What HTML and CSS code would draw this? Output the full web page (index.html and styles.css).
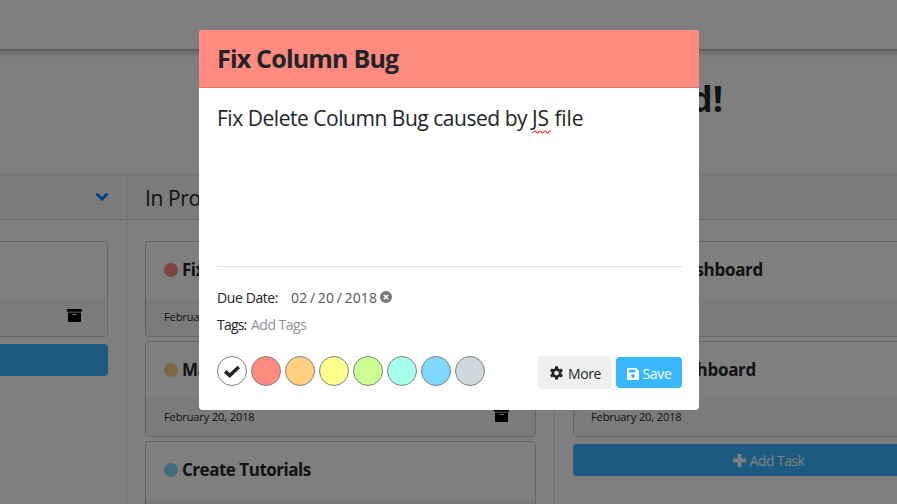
FILE: index.html
```html
<!DOCTYPE html>
<html lang="en">
<head>
<meta charset="utf-8">
<title>Dashboard</title>
<link rel="stylesheet" href="styles.css">
</head>
<body>
<svg class="sprite" aria-hidden="true">
  <symbol id="archive" viewBox="0 0 15 14"><path d="M.6 0h13.8q.6 0 .6.6v2.1H0V.6Q0 0 .6 0zM1 3.6h13v8.6q0 .8-.8.8H1.800q-.8 0-.8-.8zM5.500 5v1h4V5z" fill-rule="evenodd"/></symbol>
</svg>
<header class="navbar"></header>
<h1 class="welcome">Welcome to your Dashboard!</h1>
<main class="board">
  <section class="column first">
    <div class="column-head"><span></span>
      <svg class="chevron" viewBox="0 0 12 8"><path d="M1.500 1.500 6 6l4.500-4.500"/></svg>
    </div>
    <div class="cards">
      <article class="card"><div class="card-body"></div><div class="card-foot"><span></span><svg class="archive"><use href="#archive"/></svg></div></article>
      <div class="add"></div>
    </div>
  </section>
  <section class="column">
    <div class="column-head"><span>In Progress</span></div>
    <div class="cards">
      <article class="card"><div class="card-body"><i class="dot red"></i>Fix Column Bug</div><div class="card-foot"><span>February 20, 2018</span><svg class="archive"><use href="#archive"/></svg></div></article>
      <article class="card"><div class="card-body"><i class="dot orange"></i>Make Video</div><div class="card-foot"><span>February 20, 2018</span><svg class="archive"><use href="#archive"/></svg></div></article>
      <article class="card"><div class="card-body"><i class="dot blue"></i>Create Tutorials</div><div class="card-foot"></div></article>
    </div>
  </section>
  <section class="column last">
    <div class="column-head"><span>Done</span></div>
    <div class="cards">
      <article class="card"><div class="card-body"><span class="end">Create Dashboard</span></div><div class="card-foot"></div></article>
      <article class="card"><div class="card-body"><span class="end second">Style Dashboard</span></div><div class="card-foot"><span>February 20, 2018</span></div></article>
      <div class="add"><svg class="plus" viewBox="0 0 12 12"><path d="M6 0v12M0 6h12"/></svg><span>Add Task</span></div>
    </div>
  </section>
</main>
<div class="backdrop">
  <div class="modal">
    <div class="modal-head">Fix Column Bug</div>
    <div class="modal-body">
      <div class="description"><span class="lead">Fix Delete Column Bug caused by </span><span class="misspelt">JS<svg viewBox="0 0 19 4"><path d="M0 3l1-.5 1.500-1.500h1L5 3h1l1.500-2h1L10 3h1l1.500-2h1L15 3h1l1.500-2H19"/></svg></span> file</div>
      <div class="row due"><span class="label">Due Date:</span><span class="date">02 / 20 / 2018</span><svg class="clear" viewBox="0 0 12 12"><circle cx="6" cy="6" r="6"/><path d="M3.800 3.800l4.400 4.400M8.200 3.800 3.800 8.200"/></svg></div>
      <div class="row tags"><span class="label">Tags:</span><span class="placeholder">Add Tags</span></div>
      <div class="actions">
        <span class="swatch white"><svg viewBox="0 0 16 13"><path d="M1.200 6.400 5.700 10.500 14.800 2"/></svg></span>
        <span class="swatch red"></span><span class="swatch orange"></span><span class="swatch yellow"></span><span class="swatch green"></span><span class="swatch teal"></span><span class="swatch blue"></span><span class="swatch gray"></span>
        <button class="more"><svg viewBox="0 0 14 14"><path d="M5.400 2.200 5.700.3h2.600l.3 1.900 1.300.8 1.800-.7 1.300 2.300-1.500 1.200v1.400l1.500 1.200-1.300 2.300-1.800-.7-1.300.8-.3 1.900H5.700l-.3-1.900-1.300-.8-1.800.7L1 8.400l1.500-1.200V5.800L1 4.600l1.300-2.300 1.800.7zM7 4.400a2.200 2.200 0 1 0 0 4.400 2.200 2.200 0 0 0 0-4.400z" fill-rule="evenodd"/></svg><span>More</span></button>
        <button class="save"><svg viewBox="0 0 12 12"><path d="M1.200 0h7.900L12 2.900v7.900q0 1.200-1.200 1.200H1.200Q0 12 0 10.800V1.200Q0 0 1.200 0zM1.800 1.700v2.700h6.700V1.700zM6 6.100a1.900 1.900 0 1 0 0 3.800 1.900 1.900 0 0 0 0-3.800z" fill-rule="evenodd"/></svg><span>Save</span></button>
      </div>
    </div>
  </div>
</div>
</body>
</html>
```
FILE: styles.css
```css
* { box-sizing: border-box; }
body {
  margin: 0;
  height: 504px;
  overflow: hidden;
  background: #fff;
  color: #212529;
  font-family: "Open Sans", "Noto Sans", sans-serif;
}
.sprite { display: none; }
.navbar { height: 49px; margin: 0 -10px; box-shadow: 0 1px 7px rgba(0, 0, 0, .5); background: #fff; }
.welcome {
  margin: 25px auto 0;
  height: 100px;
  width: 549px;
  font-size: 36px;
  line-height: 50px;
  font-weight: 700;
  text-align: right;
  white-space: nowrap;
}
.board {
  display: grid;
  grid-template-columns: 427px 427px 428px;
  width: 1282px;
  height: 330px;
  overflow: hidden;
  margin-left: -299px;
}
.column { height: 400px; border-right: 2px solid #eee; }
.column-head {
  height: 46px;
  padding: 1px 18px 0 17px;
  display: flex;
  align-items: center;
  justify-content: space-between;
  background: #f7f7f7;
  border-top: 1px solid #e8e8e8;
  border-bottom: 1px solid #d0d0d0;
  font-size: 21px;
  letter-spacing: -.4px;
}
.chevron { width: 12px; height: 8px; margin-top: -2px; fill: none; stroke: #007bff; stroke-width: 3; stroke-linecap: round; }
.cards { padding: 21px 17px 0; display: flex; flex-direction: column; gap: 4px; }
.first .cards { padding-right: 18px; }
.last .cards { padding-left: 18px; }
.card { height: 96px; border: 1px solid #c8c8c8; border-radius: 4px; overflow: hidden; }
.card-body {
  height: 56px;
  padding: 0 18px;
  display: flex;
  align-items: center;
  font-size: 17px;
  line-height: 24px;
  padding-bottom: 1px;
  font-weight: 700;
  letter-spacing: -.48px;
  white-space: nowrap;
}
.card-foot {
  height: 38px;
  padding: 0 26px 2px 18px;
  display: flex;
  align-items: center;
  justify-content: space-between;
  background: #f7f7f7;
  font-size: 11px;
  letter-spacing: -.1px;
}
.first .card-foot { padding-right: 25px; }
.last .card-foot { padding-left: 17px; }
.archive { width: 15px; height: 14px; }
.dot { width: 14px; height: 14px; margin: 0 4px 0 0; border-radius: 50%; }
.end { width: 171px; text-align: right; letter-spacing: -.3px; }
.end.second { width: 164px; }
.red { background: #ff8a80; }
.orange { background: #ffd180; }
.yellow { background: #ffff8d; }
.green { background: #ccff90; }
.teal { background: #a7ffeb; }
.blue { background: #80d8ff; }
.gray { background: #cfd8dc; }
.white { background: #fff; }
.add {
  height: 32px;
  margin-top: 3px;
  display: flex;
  align-items: center;
  justify-content: center;
  gap: 4px;
  border-radius: 4px;
  background: #38b6ff;
  color: #fff;
  font-size: 14px;
  letter-spacing: -.6px;
}
.plus { width: 13px; height: 13px; stroke: #fff; stroke-width: 3.600; }
.add span { padding-top: 1px; }
.backdrop {
  position: absolute;
  inset: 0;
  padding: 30px 0 0 199px;
  background: rgba(0, 0, 0, .5);
}
.modal {
  width: 500px;
  height: 380px;
  border-radius: 4px;
  overflow: hidden;
  background: #fff;
}
.modal-head {
  height: 58px;
  padding: 0 18px;
  line-height: 57px;
  background: #ff8a80;
  border-bottom: 1px solid #db7770;
  font-size: 25px;
  font-weight: 700;
  letter-spacing: -.8px;
}
.modal-body { padding: 0 17px 0 18px; }
.description {
  height: 179px;
  padding: 15px 0 0;
  line-height: 31px;
  border-bottom: 1px solid #e2e2e2;
  font-size: 21px;
  letter-spacing: -.1px;
}
.lead { letter-spacing: -.47px; }
.misspelt { position: relative; }
.misspelt svg { position: absolute; left: 0; bottom: -2px; width: 19px; height: 4px; fill: none; stroke: #f00; stroke-width: 1; }
.row { display: flex; align-items: center; height: 27px; font-size: 14px; letter-spacing: -.4px; }
.due { margin-top: 17px; }
.due .label { width: 74px; }
.date { width: 89px; color: #555; letter-spacing: .15px; word-spacing: -1.200px; }
.clear { width: 12px; height: 12px; fill: #777; stroke: #fff; stroke-width: 1.600; margin-top: -2px; }
.clear circle { stroke: none; }
.tags .label { width: 34px; letter-spacing: -.8px; }
.placeholder { color: #8e9297; letter-spacing: -.5px; }
.actions { display: flex; align-items: center; gap: 4px; margin-top: 17px; height: 34px; }
.swatch { width: 30px; height: 30px; border: 1px solid #808080; border-radius: 50%; display: grid; place-items: center; margin-top: -2px; }
.swatch svg { width: 16px; height: 13px; fill: none; stroke: #212529; stroke-width: 3.600; }
button {
  display: flex;
  align-items: center;
  justify-content: center;
  gap: 4px;
  padding: 3px 0 0;
  border: 0;
  border-radius: 4px;
  font-family: inherit;
  font-size: 14px;
  letter-spacing: -.35px;
  color: #212529;
}
.more { width: 74px; height: 33px; margin-left: auto; background: #efefef; }
.more svg { width: 15px; height: 15px; fill: #212529; }
.save { width: 66px; height: 31px; background: #38b6ff; color: #fff; }
.save svg { width: 12px; height: 12px; fill: #fff; }
```
